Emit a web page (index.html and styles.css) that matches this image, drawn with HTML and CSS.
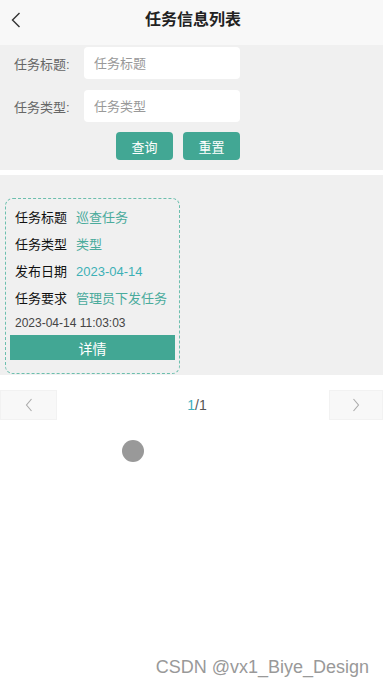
FILE: index.html
```html
<!DOCTYPE html>
<html lang="zh">
<head>
<meta charset="UTF-8" />
<meta name="viewport" content="width=device-width,initial-scale=1" />
<title>任务信息列表</title>
<link rel="stylesheet" href="styles.css">
</head>
<body>

<!-- HEADER -->
<div class="header">
  <a class="back" href="#">
    <svg width="10" height="16" viewBox="0 0 10 16"><path d="M8.5 1 L1.5 8 L8.5 15" fill="none" stroke="#333" stroke-width="1.4"/></svg>
  </a>
  <h1>任务信息列表</h1>
</div>

<!-- SEARCH -->
<div class="search">
  <div class="field">
    <label>任务标题:</label>
    <input type="text" placeholder="任务标题" />
  </div>
  <div class="field">
    <label>任务类型:</label>
    <input type="text" placeholder="任务类型" />
  </div>
  <div class="actions">
    <button class="btn">查询</button>
    <button class="btn">重置</button>
  </div>
</div>

<!-- LIST -->
<div class="list">
  <div class="card">
    <div class="row"><span class="key">任务标题</span><span class="val">巡查任务</span></div>
    <div class="row"><span class="key">任务类型</span><span class="val">类型</span></div>
    <div class="row"><span class="key">发布日期</span><span class="val date">2023-04-14</span></div>
    <div class="row"><span class="key">任务要求</span><span class="val">管理员下发任务</span></div>
    <div class="time">2023-04-14 11:03:03</div>
    <button class="detail">详情</button>
  </div>
</div>

<!-- PAGER -->
<div class="pager">
  <div class="page-btn">
    <svg width="8" height="14" viewBox="0 0 8 14"><path d="M6.5 1 L1.5 7 L6.5 13" fill="none" stroke="#aaa" stroke-width="1.1"/></svg>
  </div>
  <div class="page-num"><span class="cur">1</span>/1</div>
  <div class="page-btn">
    <svg width="8" height="14" viewBox="0 0 8 14"><path d="M1.5 1 L6.5 7 L1.5 13" fill="none" stroke="#aaa" stroke-width="1.1"/></svg>
  </div>
</div>

<div class="loading"><span class="dot"></span></div>

<div class="mark">CSDN @vx1_Biye_Design</div>

</body>
</html>
```

FILE: styles.css
```css
:root{
  --teal:#42a794; --val:#4aab9c; --gray:#f0f0f0;
}
*{box-sizing:border-box;margin:0;padding:0;
  font-family:"Liberation Sans","Noto Sans CJK SC",sans-serif}

body{background:#fff;height:100vh;position:relative;overflow:hidden}

.header{
  height:45px;
  background:#f8f8f8;
  position:relative;
  text-align:center;
}
.header h1{
  font-size:16px;font-weight:bold;color:#222;line-height:40px;padding-left:3px;
}
.back{position:absolute;left:11px;top:12px;display:block;line-height:0}

.search{
  background:var(--gray);
  padding:2px 143px 10px 14px;
  display:flex;flex-direction:column;gap:11px;
}
.field{display:flex;align-items:center}
.field label{width:70px;font-size:13px;color:#666}
.field input{
  width:156px;height:32px;
  border:none;border-radius:4px;background:#fff;
  padding-left:10px;font-size:13px;color:#333;outline:none;
}
.field input::placeholder{color:#999}
.actions{display:flex;justify-content:flex-end;gap:10px;margin-top:-1px}
.btn{
  width:57px;height:28px;
  background:var(--teal);color:#fff;border:none;border-radius:4px;
  font-size:13px;cursor:pointer;
}

.list{
  margin-top:5px;
  background:var(--gray);
  padding:23px 0 1px 5px;
}
.card{
  width:175px;
  border:1px dashed #6cbfae;border-radius:8px;
  padding:5px 4px 13px 4px;
}
.row{display:flex;gap:9px;line-height:27px;font-size:13px;padding-left:5px}
.key{color:#111}
.val{color:var(--val)}
.val.date{color:#3db0b6}
.time{font-size:12px;color:#444;line-height:22px;padding-left:5px}
.detail{
  display:block;width:100%;height:25px;margin-top:1px;
  background:var(--teal);color:#fff;border:none;font-size:14px;
}

.pager{
  margin-top:15px;height:30px;
  display:flex;justify-content:space-between;align-items:center;
}
.page-btn{
  width:56px;height:30px;background:#f8f8f8;border:1px solid #f2f2f2;
  display:flex;align-items:center;justify-content:center;
}
.page-btn:first-child{width:57px}
.page-btn:last-child{width:54px}
.page-num{font-size:14px;color:#555;padding-left:8px}
.cur{color:#3db0c0}

.loading{padding:20px 0 0 122px}
.dot{display:block;width:22px;height:22px;border-radius:50%;background:#999}

.mark{
  position:absolute;right:14px;bottom:9px;
  font-size:18px;color:#999;
}
```
